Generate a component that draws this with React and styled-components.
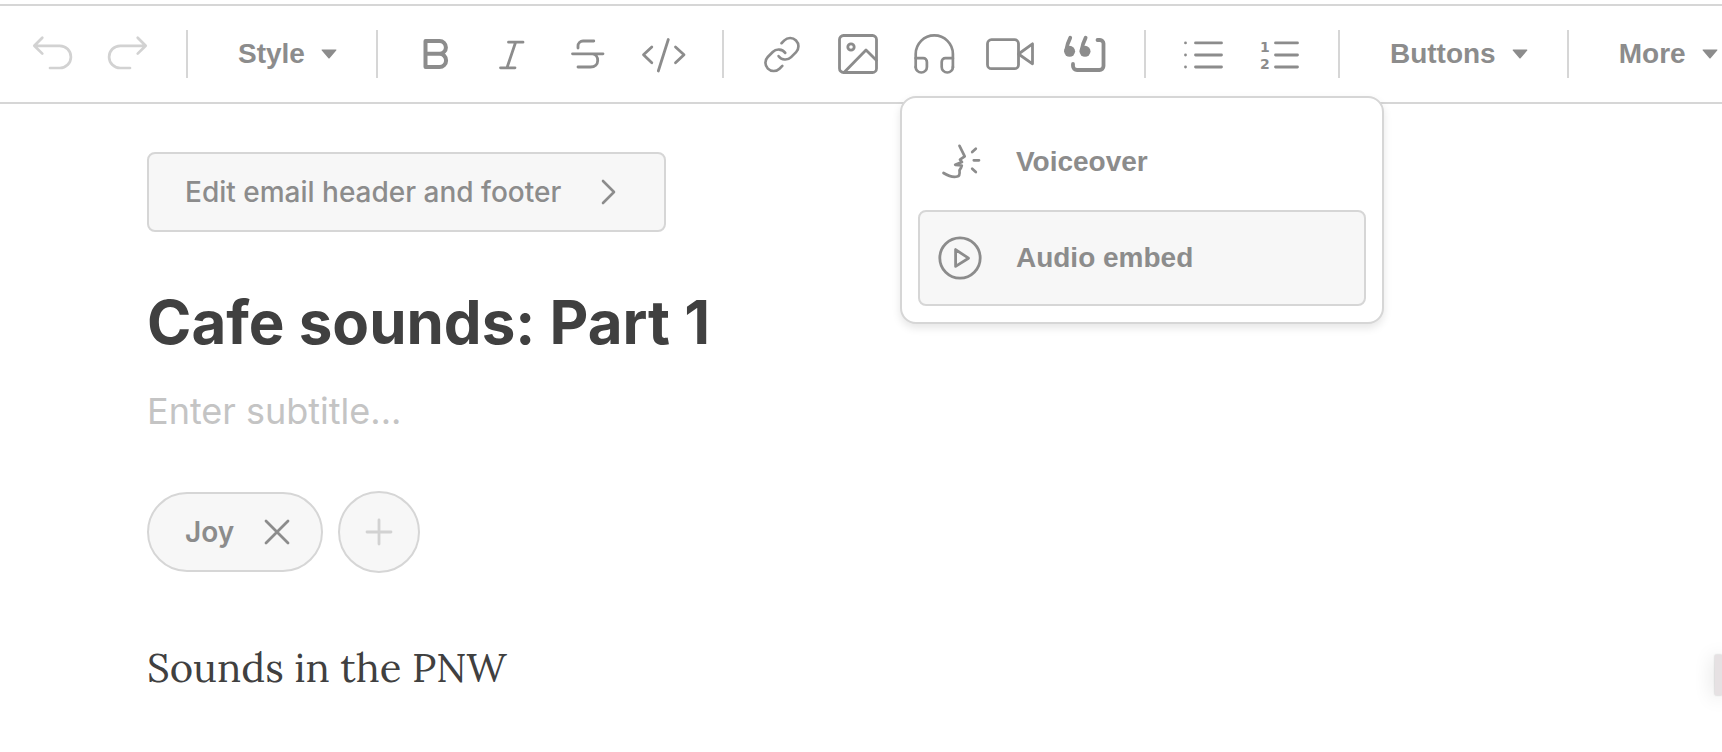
import React, { useState } from "react";
import styled, { createGlobalStyle, css } from "styled-components";

const GlobalStyle = createGlobalStyle`
    :root {
        --text-main: #404040;
        --text-muted: #8c8c8c;
        --text-faint: #c4c4c4;
        --disabled: #d2d2d2;
        --line: #d6d6d6;
        --fill: #f7f7f7;
        --font-toolbar: Helvetica, "Liberation Sans", Arial, sans-serif;
        --font-ui: Inter, "Liberation Sans", sans-serif;
        --font-body: Lora, "Liberation Serif", serif;
    }
    * {
        box-sizing: border-box;
    }
    body {
        margin: 0;
        background: #fff;
    }
    button, input {
        font: inherit;
        color: inherit;
    }
`;

// Icons, all on a 48px grid
const Svg = ({ children, flip, weight = 2.8 }) => (
    <svg
        width="48"
        height="48"
        viewBox="0 0 48 48"
        fill="none"
        stroke="currentColor"
        strokeWidth={weight}
        strokeLinecap="round"
        strokeLinejoin="round"
        aria-hidden="true"
    >
        <g transform={flip ? "translate(48 0) scale(-1 1)" : undefined}>{children}</g>
    </svg>
);

const UndoIcon = ({ flip }) => (
    <Svg flip={flip} weight={2.7}>
        <path d="M14.3 7.8l-8 8 8 7.8M6.5 15.8h25.3a11.1 11.1 0 0 1 0 22.2H22" />
    </Svg>
);

const BoldIcon = () => (
    <Svg weight={4}>
        <path d="M13.5 11h14a6.4 6.4 0 0 1 0 12.8h-14M27.5 23.8a6.6 6.6 0 0 1 0 13.2h-14V11" />
    </Svg>
);

const ItalicIcon = () => (
    <Svg>
        <path d="M20.5 12.2H35M12.5 37.8H27M27.6 12.2 19 37.8" />
    </Svg>
);

const StrikeIcon = () => (
    <Svg>
        <path d="M8.5 23.8H39M14 18v-2a5 5 0 0 1 5-5h10.8M14 37h12.5c4.5 0 7.2-2.7 7.2-6.5s-2.2-6.5-5.2-6.7" />
    </Svg>
);

const CodeIcon = () => (
    <Svg>
        <path d="m11.8 17-8.3 7.8 8.3 8M28.3 9.5l-10 31.5M35.5 17l8.5 7.8-8.5 8" />
    </Svg>
);

const LinkIcon = () => (
    <Svg weight={1.6}>
        <g transform="translate(4 4.6) scale(1.66)">
            <path d="M10 13a5 5 0 0 0 7.54.54l3-3a5 5 0 0 0-7.07-7.07l-1.72 1.71" />
            <path d="M14 11a5 5 0 0 0-7.54-.54l-3 3a5 5 0 0 0 7.07 7.07l1.71-1.71" />
        </g>
    </Svg>
);

const ImageIcon = () => (
    <Svg>
        <rect x="5.5" y="5.5" width="37" height="37" rx="4" />
        <circle cx="17" cy="17" r="3.2" />
        <path d="M10.5 42 32 20l10.3 10.3" />
    </Svg>
);

const HeadphonesIcon = () => (
    <Svg weight={2.7}>
        <path d="M5.7 37.5V24a18.6 18.6 0 0 1 37.2 0v13.5" />
        <path d="M5.7 28.2h7.5a3.7 3.7 0 0 1 3.7 3.7v5a5.6 5.6 0 0 1-11.2 0M42.9 28.2h-7.5a3.7 3.7 0 0 0-3.7 3.7v5a5.6 5.6 0 0 0 11.2 0" />
    </Svg>
);

const VideoIcon = () => (
    <Svg>
        <rect x="1.5" y="9.7" width="31" height="29" rx="4" />
        <path d="M32.5 24 46.5 13.8v20Z" />
    </Svg>
);

const QuoteIcon = () => (
    <Svg weight={3.8}>
        <path d="M8.2 7.8C6 12 4.8 16 4.2 20.5M23.6 7.8c-2.2 4.2-3.4 8.2-4 12.7M35.5 10H38a3.5 3.5 0 0 1 3.5 3.5V36a4 4 0 0 1-4 4H15a4 4 0 0 1-4-4v-2" />
        <circle cx="7.6" cy="21.3" r="5.5" fill="currentColor" stroke="none" />
        <circle cx="23" cy="21.3" r="5.5" fill="currentColor" stroke="none" />
    </Svg>
);

const BulletListIcon = () => (
    <Svg>
        <path d="M15.5 12.9h26M15.5 25h26M15.5 37h26" />
        <path d="M5.5 12.9h.01M5.5 25h.01M5.5 37h.01" />
    </Svg>
);

const NumberListIcon = () => (
    <Svg>
        <path d="M19.5 12.9h22M19.5 25h22M19.5 37h22" />
        <Digit x="4" y="22">1</Digit>
        <Digit x="4" y="39">2</Digit>
    </Svg>
);

const VoiceoverIcon = () => (
    <Svg weight={2.7}>
        <path d="m23.5 7.8 5.2 10.5-4.7 3.3 2 2.4-6.8 2.8 6.6.7-.8 2.3-1.5 2.5c.4 3.2 0 5.9-2.3 6.2-4 1-8.8-.5-13.7-3.5" />
        <path d="m36.2 14 3.6-3.3M37.8 22.3H43M36.2 30.7l3.6 3.3" />
    </Svg>
);

const PlayIcon = () => (
    <Svg>
        <circle cx="24" cy="24" r="20.2" />
        <path d="M19.6 15.6v16.8L32.5 24.2Z" />
    </Svg>
);

const Caret = () => (
    <svg width="16" height="10" viewBox="0 0 16 10" fill="currentColor" aria-hidden="true">
        <path d="M1.2.5h13.6c.6 0 .8.6.4 1L8.6 9.2a.8.8 0 0 1-1.2 0L.8 1.5C.4 1.1.6.5 1.2.5Z" />
    </svg>
);

const SmallIcon = ({ d, weight = 2.8 }) => (
    <svg width="32" height="32" viewBox="0 0 32 32" fill="none" stroke="currentColor" strokeWidth={weight} strokeLinecap="round" strokeLinejoin="round" aria-hidden="true">
        <path d={d} />
    </svg>
);

const formatTools = [
    { label: "Bold", icon: <BoldIcon /> },
    { label: "Italic", icon: <ItalicIcon /> },
    { label: "Strikethrough", icon: <StrikeIcon /> },
    { label: "Code", icon: <CodeIcon /> },
];

const listTools = [
    { label: "Bullet list", icon: <BulletListIcon /> },
    { label: "Ordered list", icon: <NumberListIcon /> },
];

const Tool = ({ label, icon, ...rest }) => (
    <IconButton type="button" aria-label={label} {...rest}>
        {icon}
    </IconButton>
);

const MenuTool = ({ children }) => (
    <TextButton type="button">
        {children}
        <Caret />
    </TextButton>
);

const App = () => {
    const [audioOpen, setAudioOpen] = useState(true);
    const [title, setTitle] = useState("Cafe sounds: Part 1");
    const [subtitle, setSubtitle] = useState("");

    return (
        <Page>
            <GlobalStyle />
            <Toolbar>
                <Group>
                    <Tool label="Undo" icon={<UndoIcon />} disabled />
                    <Tool label="Redo" icon={<UndoIcon flip />} disabled />
                </Group>
                <Divider />
                <MenuTool>Style</MenuTool>
                <Divider />
                <Group>
                    {formatTools.map((tool) => (
                        <Tool key={tool.label} {...tool} />
                    ))}
                </Group>
                <Divider />
                <Group>
                    <Tool label="Link" icon={<LinkIcon />} />
                    <Tool label="Image" icon={<ImageIcon />} />
                    <MenuAnchor>
                        <Tool label="Audio" icon={<HeadphonesIcon />} onClick={() => setAudioOpen(!audioOpen)} />
                        {audioOpen && (
                            <Menu>
                                <MenuItem type="button">
                                    <VoiceoverIcon />
                                    Voiceover
                                </MenuItem>
                                <MenuItem type="button" $active>
                                    <PlayIcon />
                                    Audio embed
                                </MenuItem>
                            </Menu>
                        )}
                    </MenuAnchor>
                    <Tool label="Video" icon={<VideoIcon />} />
                    <Tool label="Quote" icon={<QuoteIcon />} />
                </Group>
                <Divider />
                <Group>
                    {listTools.map((tool) => (
                        <Tool key={tool.label} {...tool} />
                    ))}
                </Group>
                <Divider />
                <MenuTool>Buttons</MenuTool>
                <Divider />
                <MenuTool>More</MenuTool>
            </Toolbar>

            <Editor>
                <HeaderButton type="button">
                    Edit email header and footer
                    <SmallIcon d="m11 5 11 11-11 11" weight={2.6} />
                </HeaderButton>
                <TitleInput aria-label="Title" value={title} onChange={(e) => setTitle(e.target.value)} />
                <SubtitleInput
                    aria-label="Subtitle"
                    placeholder="Enter subtitle..."
                    value={subtitle}
                    onChange={(e) => setSubtitle(e.target.value)}
                />
                <Tags>
                    <Tag>
                        Joy
                        <RemoveButton type="button" aria-label="Remove Joy">
                            <SmallIcon d="m5 5 22 22M27 5 5 27" />
                        </RemoveButton>
                    </Tag>
                    <AddButton type="button" aria-label="Add">
                        <SmallIcon d="M16 4v24M4 16h24" />
                    </AddButton>
                </Tags>
                <Body>Sounds in the PNW</Body>
            </Editor>
            <SideTab />
        </Page>
    );
};

export default App;

const Page = styled.div`
    position: relative;
    min-height: 100vh;
    padding-top: 4px;
    overflow: hidden;
`;

//toolbar
const Toolbar = styled.div`
    display: flex;
    align-items: center;
    height: 100px;
    padding-left: 14px;
    border-top: 2px solid var(--line);
    border-bottom: 2px solid var(--line);
    color: var(--text-muted);
    font-family: var(--font-toolbar);
    font-size: 28px;
    font-weight: 700;
`;

const Group = styled.div`
    display: flex;
    flex-shrink: 0;
`;

const Divider = styled.span`
    flex-shrink: 0;
    width: 2px;
    height: 48px;
    margin: 0 20px;
    background: var(--line);
`;

const plainButton = css`
    display: flex;
    align-items: center;
    border: none;
    background: none;
    cursor: pointer;
`;

const IconButton = styled.button`
    ${plainButton}
    justify-content: center;
    width: 76px;
    height: 96px;
    padding: 0;
    &:disabled {
        color: var(--disabled);
        cursor: default;
    }
`;

const TextButton = styled.button`
    ${plainButton}
    flex-shrink: 0;
    gap: 16px;
    height: 96px;
    padding: 0 19px 0 30px;
`;

const Digit = styled.text`
    fill: currentColor;
    stroke: none;
    font-family: "DejaVu Sans", sans-serif;
    font-size: 14px;
    font-weight: 700;
`;

//audio menu
const MenuAnchor = styled.div`
    position: relative;
`;

const Menu = styled.div`
    position: absolute;
    top: 90px;
    left: 4px;
    z-index: 1;
    width: 484px;
    padding: 16px;
    border: 2px solid var(--line);
    border-radius: 16px;
    background: #fff;
    box-shadow: 0 4px 8px rgba(0, 0, 0, 0.1);
`;

const MenuItem = styled.button`
    ${plainButton}
    gap: 32px;
    width: 100%;
    height: 96px;
    padding: 0 16px;
    border: 2px solid ${({ $active }) => ($active ? "var(--line)" : "transparent")};
    border-radius: 8px;
    background: ${({ $active }) => ($active ? "var(--fill)" : "none")};
`;

//editor
const Editor = styled.main`
    padding: 48px 147px;
    color: var(--text-main);
    font-family: var(--font-ui);
`;

const HeaderButton = styled.button`
    ${plainButton}
    gap: 31px;
    height: 80px;
    padding: 0 40px 0 36px;
    border: 2px solid var(--line);
    border-radius: 8px;
    background: var(--fill);
    color: var(--text-muted);
    font-size: 28px;
    font-weight: 500;
`;

const field = css`
    display: block;
    width: 100%;
    padding: 0;
    border: none;
    outline: none;
    background: none;
`;

const TitleInput = styled.input`
    ${field}
    height: 80px;
    margin-top: 50px;
    font-size: 60px;
    font-weight: 700;
`;

const SubtitleInput = styled.input`
    ${field}
    height: 48px;
    margin-top: 25px;
    font-size: 36px;
    &::placeholder {
        color: var(--text-faint);
        opacity: 1;
    }
`;

const Tags = styled.div`
    display: flex;
    align-items: center;
    gap: 15px;
    margin-top: 56px;
    color: var(--text-muted);
    font-size: 28px;
    font-weight: 600;
`;

const Tag = styled.span`
    display: flex;
    align-items: center;
    gap: 27px;
    height: 80px;
    padding: 0 28px 0 36px;
    border: 2px solid var(--line);
    border-radius: 40px;
    background: var(--fill);
`;

const RemoveButton = styled.button`
    ${plainButton}
    padding: 0;
`;

const AddButton = styled.button`
    ${plainButton}
    justify-content: center;
    width: 82px;
    height: 82px;
    padding: 0;
    border: 2px solid var(--line);
    border-radius: 50%;
    background: var(--fill);
    color: var(--disabled);
`;

const Body = styled.p`
    margin: 64px 0 0;
    font-family: var(--font-body);
    font-size: 40px;
    line-height: 62px;
`;

//panel that peeks in from the right edge
const SideTab = styled.div`
    position: absolute;
    top: 655px;
    right: 0;
    width: 7px;
    height: 40px;
    background: #e6e1e3;
    box-shadow: 0 2px 20px rgba(0, 0, 0, 0.2), 0 0 2px rgba(0, 0, 0, 0.3);
`;
